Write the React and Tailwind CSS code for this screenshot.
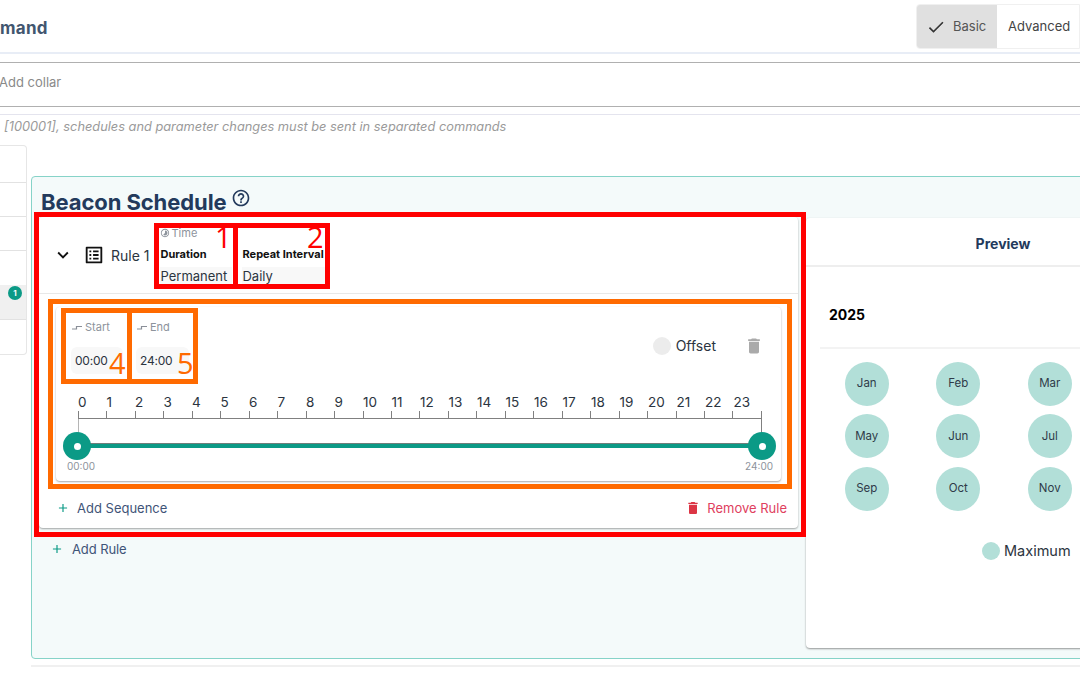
import React from "react";
import { MdCheck, MdHelpOutline, MdDelete, MdExpandMore, MdOutlineListAlt, MdAdd, MdTimelapse } from "react-icons/md";

const months = ["Jan", "Feb", "Mar", "Apr", "May", "Jun", "Jul", "Aug", "Sep", "Oct", "Nov", "Dec"];
const hours = Array.from({ length: 24 }, (_, i) => i);

const StepIcon = () => (
  <svg width="10" height="8" viewBox="0 0 10 8" className="text-[#8a8f98]">
    <path d="M0 5h4.5V2.5H10" fill="none" stroke="currentColor" strokeWidth="1.2" />
  </svg>
);

const TimeBox = ({ label, value, className }) => (
  <div className={`flex flex-col h-[66px] rounded ${className}`}>
    <div className="flex items-center gap-[3px] pl-[5px] h-[26px] pt-[3px] text-[11px] text-[#8d939c]">
      <StepIcon />
      <span>{label}</span>
    </div>
    <div className="mx-[4px] mt-[8px] h-[27px] flex items-center rounded-md bg-[#f8f8f8] pl-[4px] text-[12px] tracking-[-0.2px] text-[#2b3440]">
      {value}
    </div>
  </div>
);

const Handle = () => (
  <div className="w-[28px] h-[28px] rounded-full bg-[#0b9a86] flex items-center justify-center shrink-0">
    <div className="w-[7px] h-[7px] rounded-full bg-white" />
  </div>
);

const Annotation = ({ className }) => <div className={`absolute border-[5px] pointer-events-none ${className}`} />;

const Mark = ({ children, className }) => (
  <span className={`absolute text-[29px] leading-none font-['Open_Sans',sans-serif] ${className}`}>{children}</span>
);

export default function App() {
  return (
    <div className="relative w-[1080px] h-[675px] overflow-hidden bg-white font-['Inter',sans-serif] text-[#2b3440]">
      {/* header */}
      <div className="flex justify-between h-[54px] border-b-2 border-[#e8edf6]">
        <div className="pt-[17px] text-[17px] font-bold text-[#42566f] leading-[22px] tracking-[0.3px]">mand</div>
        <div className="flex mt-[4px] h-[45px] w-[164px] rounded-l border border-[#f0f0f0] text-[13px] overflow-hidden">
          <div className="flex items-center w-[80px] bg-[#e0e0e0] pl-[9px] gap-[7px] text-[#555]">
            <MdCheck className="w-[20px] h-[20px] text-[#333]" />
            <span>Basic</span>
          </div>
          <div className="flex items-center pl-[11px] text-[#444]">Advanced</div>
        </div>
      </div>

      {/* collar input */}
      <div className="mt-[8px] h-[45px] border-y border-[#b0b0b0] flex items-center pb-[4px] -indent-[1px] text-[13px] text-[#8a8a8a]">Add collar</div>
      <div className="mt-[7px] border-t border-[#e4e4ee]" />
      <div className="h-[30px] pl-[4px] pb-[6px] flex items-center italic text-[12.8px] text-[#9a9a9a]">
        [100001], schedules and parameter changes must be sent in separated commands
      </div>

      <div className="flex">
        {/* device list */}
        <div className="w-[27px] h-[210px] border border-l-0 border-[#e6e6e6] rounded-r shrink-0 flex flex-col">
          <div className="h-[37px] border-b border-[#e2e2e2]" />
          <div className="h-[34px] border-b border-[#e2e2e2]" />
          <div className="h-[34px] border-b border-[#e2e2e2]" />
          <div className="h-[34px]" />
          <div className="h-[35px] bg-[#f0f0f0] border-b border-[#e2e2e2] relative">
            <span className="absolute right-[4px] top-[1px] w-[14px] h-[14px] rounded-full bg-[#0b9a86] text-white text-[8px] font-bold flex items-center justify-center">1</span>
          </div>
        </div>

        {/* schedule panel */}
        <div className="ml-[4px] mt-[31px] w-[1100px] h-[483px] shrink-0 border border-[#86d3c8] rounded-l bg-[#f4fafa] pl-[7px]">
          <div className="h-[39px] flex items-end gap-[4px]">
            <span className="pl-[2px] text-[22px] leading-[28px] font-bold text-[#233a5c] tracking-[-0.08px]">Beacon Schedule</span>
            <MdHelpOutline className="w-[20px] h-[20px] mb-[8px] text-[#233a5c]" />
          </div>

          <div className="flex gap-[8px] items-start mt-[1px]">
            {/* rule card */}
            <div className="flex flex-col shrink-0 w-[759px]">
              <div className="h-[311px] bg-white rounded shadow-[0_1px_2px_rgba(0,0,0,0.35)] flex flex-col">
                <div className="h-[77px] border-b border-[#e8e8e8] flex items-center shrink-0">
                  <MdExpandMore className="ml-[13px] w-[22px] h-[22px] text-[#111]" />
                  <MdOutlineListAlt className="ml-[9px] w-[22px] h-[22px] text-[#111]" />
                  <span className="ml-[6px] text-[14px]">Rule 1</span>
                  <div className="ml-[11px] w-[72px] flex flex-col self-start pt-[9px]">
                    <div className="flex items-center gap-[1px] h-[14px] text-[11px] text-[#8d939c]">
                      <MdTimelapse className="w-[10px] h-[10px]" />
                      <span>Time</span>
                    </div>
                    <div className="mt-[7px] h-[14px] text-[11px] font-bold text-[#111] leading-[14px]">Duration</div>
                    <div className="mt-[6px] h-[18px] bg-[#f8f8f8] text-[13px] leading-[18px]">Permanent</div>
                  </div>
                  <div className="ml-[10px] w-[84px] flex flex-col self-start pt-[30px]">
                    <div className="h-[14px] text-[11px] font-bold text-[#111] leading-[14px] whitespace-nowrap">Repeat Interval</div>
                    <div className="mt-[6px] h-[18px] bg-[#f8f8f8] text-[13px] leading-[18px]">Daily</div>
                  </div>
                </div>

                {/* sequence card */}
                <div className="mx-[17px] mt-[13px] h-[174px] bg-white rounded shadow-[0_1px_2px_rgba(0,0,0,0.35)] shrink-0 flex flex-col">
                  <div className="flex items-start pl-[11px] pt-[6px] h-[78px] shrink-0">
                    <TimeBox label="Start" value="00:00" className="w-[60px]" />
                    <TimeBox label="End" value="24:00" className="w-[61px] ml-[5px]" />
                    <div className="ml-auto flex items-center pt-[23px] pr-[17px]">
                      <span className="w-[18px] h-[18px] rounded-full bg-[#ececec]" />
                      <span className="ml-[5px] text-[14px] leading-[18px]">Offset</span>
                      <MdDelete className="ml-[28px] w-[20px] h-[20px] text-[#aaaaaa]" />
                    </div>
                  </div>

                  {/* ruler */}
                  <div className="ml-[22px] w-[684px] flex flex-col shrink-0">
                    <div className="flex h-[26px] items-end">
                      {hours.map((h) => (
                        <div key={h} className="flex-1 text-[13.5px] leading-[20px] -mb-[1px] text-[#2b3440]">{h}</div>
                      ))}
                    </div>
                    <div className="flex h-[8px] border-b border-r border-[#808080]">
                      {hours.map((h) => (
                        <div key={h} className="flex-1 border-l border-[#808080]" />
                      ))}
                    </div>
                    <div className="flex justify-between h-[14px]">
                      <div className="w-px bg-[#b5b5b5]" />
                      <div className="w-px bg-[#808080]" />
                    </div>
                  </div>
                  <div className="relative ml-[7px] w-[713px] flex items-center justify-between -mt-[1px]">
                    <div className="absolute left-[14px] right-[14px] top-[11px] h-[5px] bg-[#0b9a86] border-t border-[#6f7f7c]" />
                    <div className="relative"><Handle /></div>
                    <div className="relative"><Handle /></div>
                  </div>
                  <div className="flex justify-between pl-[11px] pr-[8px] text-[10px] leading-[13px] text-[#8d939c]">
                    <span>00:00</span>
                    <span>24:00</span>
                  </div>
                </div>

                <div className="flex items-center justify-between mt-[16px] pl-[17px] pr-[11px] text-[13px] leading-[22px]">
                  <div className="flex items-center text-[#3f5478]">
                    <MdAdd className="w-[14px] h-[14px] text-[#0b9a86]" />
                    <span className="ml-[7px]">Add Sequence</span>
                  </div>
                  <div className="flex items-center text-[#e0405e]">
                    <MdDelete className="w-[16px] h-[16px] text-[#dc3545]" />
                    <span className="ml-[6px]">Remove Rule</span>
                  </div>
                </div>
              </div>
              <div className="flex items-center mt-[11px] pl-[11px] text-[13px] leading-[20px] text-[#3f5478]">
                <MdAdd className="w-[14px] h-[14px] text-[#0b9a86]" />
                <span className="ml-[8px] tracking-[-0.1px]">Add Rule</span>
              </div>
            </div>

            {/* preview card */}
            <div className="w-[400px] h-[430px] mt-[1px] bg-white rounded shadow-[0_1px_2px_rgba(0,0,0,0.4)] shrink-0 flex flex-col">
              <div className="w-[394px] h-[49px] pt-[3px] border-b-2 border-[#eeeeee] flex items-center justify-center text-[14px] font-bold text-[#233a5c] shrink-0">Preview</div>
              <div className="ml-[14px] h-[82px] pt-[14px] border-b-2 border-[#f3f3f3] flex items-center pl-[9px] text-[14px] font-bold text-black shrink-0">2025</div>
              <div className="ml-[15px] mt-[13px] grid grid-cols-[repeat(4,91.5px)] auto-rows-[52.3px]">
                {months.map((m) => (
                  <div key={m} className="w-[91.5px] flex justify-center">
                    <div className="w-[44px] h-[44px] rounded-full bg-[#b2dfd8] flex items-center justify-center text-[11.5px] text-[#2f3b49]">{m}</div>
                  </div>
                ))}
              </div>
              <div className="ml-[176px] mt-[23px] flex items-center">
                <span className="w-[18px] h-[18px] rounded-full bg-[#b2dfd8]" />
                <span className="ml-[4px] text-[14.5px] leading-[18px]">Maximum</span>
              </div>
            </div>
          </div>
        </div>
      </div>
      <div className="ml-[31px] mt-[6px] border-t-2 border-[#f0f0f0]" />

      {/* annotation boxes */}
      <Annotation className="left-[34px] top-[212px] w-[772px] h-[325px] border-[#ff0000]" />
      <Annotation className="left-[154px] top-[223px] w-[84px] h-[66px] border-[#ff0000]" />
      <Annotation className="left-[233px] top-[223px] w-[97px] h-[66px] border-[#ff0000]" />
      <Annotation className="left-[48px] top-[299px] w-[744px] h-[190px] border-[#ff6a00]" />
      <Annotation className="left-[61px] top-[308px] w-[71px] h-[76px] border-[#ff6a00]" />
      <Annotation className="left-[127px] top-[308px] w-[71px] h-[76px] border-[#ff6a00]" />
      <Mark className="left-[215px] top-[222px] text-[#ff0000]">1</Mark>
      <Mark className="left-[307px] top-[222px] text-[#ff0000]">2</Mark>
      <Mark className="left-[109px] top-[348px] text-[#ff6a00]">4</Mark>
      <Mark className="left-[177px] top-[348px] text-[#ff6a00]">5</Mark>
    </div>
  );
}
